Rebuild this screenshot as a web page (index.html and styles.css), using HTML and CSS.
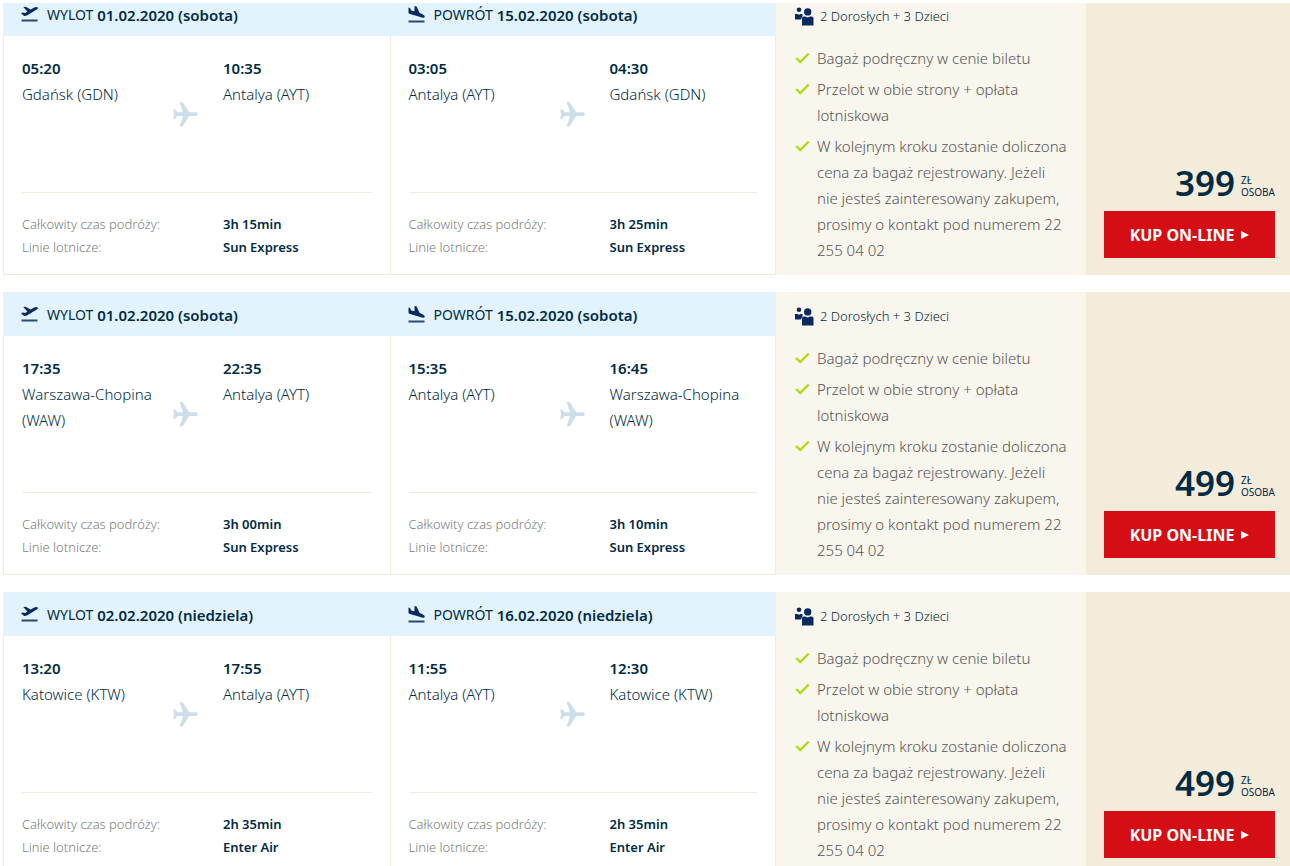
FILE: index.html
```
<!DOCTYPE html>
<html lang="pl">
<head>
  <meta charset="utf-8">
  <meta name="viewport" content="width=device-width, initial-scale=1.0">
  <title>Bilety lotnicze</title>
  <link rel="stylesheet" href="styles.css">
</head>
<body>
  <svg class="sprite" aria-hidden="true">
    <symbol id="takeoff" viewBox="0 0 17 17">
      <path d="M0.500 13.500h16v2h-16z" opacity=".85"/>
      <path d="M2.300 1 4.600.700 9.800 3.400 13.200 1.500C14.900.700 16.500.800 16.900 1.700 17.200 2.600 16.200 3.400 15 4L6.300 9.200C5.300 9.800 3.800 10.300 2.800 9.800L0 7.300 1.700 6.400 4.200 7 6.300 5.500z"/>
    </symbol>
    <symbol id="landing" viewBox="0 0 17 17">
      <path d="M0.500 14.500h16v2h-16z" opacity=".85"/>
      <path d="M0.500 1.500 2 2 3.300 4.600 6.500 5.300 6.500 0 8.600.500 11.500 6.800 15 8.400C16.400 9.200 17 10.200 16.700 11 16.400 11.800 15.400 11.900 14 11.500L2.100 8.100C1 7.800.500 7.200.500 6.200z"/>
    </symbol>
    <symbol id="plane" viewBox="0 0 26 26">
      <path d="M1 8.500H3.200L5.800 11.300H11L7.600 1H9.600C10.300 1 10.800 1.300 11.200 1.900L17.200 11.300H23.200C25 11.300 25.800 12.200 25.800 13.200S25 15 23.200 15H17.200L11.200 24.400C10.800 25 10.300 25.400 9.600 25.400H7.600L11 15H5.800L3.200 17.800H1L2.300 13.200z"/>
    </symbol>
    <symbol id="people" viewBox="0 0 19 19">
      <circle cx="4" cy="2.700" r="2.300"/>
      <path d="M0 7H2.400Q4 8.200 5.600 7H7.500V9.500L5.800 12.500H0z"/>
      <circle cx="12.700" cy="4.900" r="3.700"/>
      <path d="M7 18.500V11.500C7 10.300 8 9.600 9 9.600H10.200Q12.700 11.200 15.200 9.600H16.500C17.800 9.600 18.500 10.400 18.500 11.500V18.500z"/>
    </symbol>
    <symbol id="check" viewBox="0 0 15 12">
      <path d="M1.200 6 5.200 10 13.700 1.500" fill="none" stroke="currentColor" stroke-width="2.400"/>
    </symbol>
  </svg>

  <main class="offers">
    <article class="offer">
      <section class="flight">
        <h2 class="flight-header"><svg class="icon-flight"><use href="#takeoff"/></svg><span class="direction">WYLOT</span> 01.02.2020 (sobota)</h2>
        <div class="flight-body">
          <div class="route">
            <div class="stop"><strong>05:20</strong><span>Gdańsk (GDN)</span></div>
            <svg class="icon-plane"><use href="#plane"/></svg>
            <div class="stop"><strong>10:35</strong><span>Antalya (AYT)</span></div>
          </div>
          <dl class="info">
            <dt>Całkowity czas podróży:</dt><dd>3h 15min</dd>
            <dt>Linie lotnicze:</dt><dd>Sun Express</dd>
          </dl>
        </div>
      </section>
      <section class="flight">
        <h2 class="flight-header"><svg class="icon-flight"><use href="#landing"/></svg><span class="direction">POWRÓT</span> 15.02.2020 (sobota)</h2>
        <div class="flight-body">
          <div class="route">
            <div class="stop"><strong>03:05</strong><span>Antalya (AYT)</span></div>
            <svg class="icon-plane"><use href="#plane"/></svg>
            <div class="stop"><strong>04:30</strong><span>Gdańsk (GDN)</span></div>
          </div>
          <dl class="info">
            <dt>Całkowity czas podróży:</dt><dd>3h 25min</dd>
            <dt>Linie lotnicze:</dt><dd>Sun Express</dd>
          </dl>
        </div>
      </section>
      <section class="details">
        <p class="people"><svg class="icon-people"><use href="#people"/></svg>2 Dorosłych + 3 Dzieci</p>
        <ul class="benefits">
          <li><svg class="icon-check"><use href="#check"/></svg><span>Bagaż podręczny w cenie biletu</span></li>
          <li><svg class="icon-check"><use href="#check"/></svg><span>Przelot w obie strony + opłata lotniskowa</span></li>
          <li><svg class="icon-check"><use href="#check"/></svg><span>W kolejnym kroku zostanie doliczona cena za bagaż rejestrowany. Jeżeli nie jesteś zainteresowany zakupem, prosimy o kontakt pod numerem 22 255 04 02</span></li>
        </ul>
      </section>
      <section class="summary">
        <p class="price"><strong>399</strong><span class="unit"><span>ZŁ</span><span>OSOBA</span></span></p>
        <button class="buy-btn" type="button">KUP ON-LINE<span class="arrow"></span></button>
      </section>
    </article>

    <article class="offer">
      <section class="flight">
        <h2 class="flight-header"><svg class="icon-flight"><use href="#takeoff"/></svg><span class="direction">WYLOT</span> 01.02.2020 (sobota)</h2>
        <div class="flight-body">
          <div class="route">
            <div class="stop"><strong>17:35</strong><span>Warszawa-Chopina (WAW)</span></div>
            <svg class="icon-plane"><use href="#plane"/></svg>
            <div class="stop"><strong>22:35</strong><span>Antalya (AYT)</span></div>
          </div>
          <dl class="info">
            <dt>Całkowity czas podróży:</dt><dd>3h 00min</dd>
            <dt>Linie lotnicze:</dt><dd>Sun Express</dd>
          </dl>
        </div>
      </section>
      <section class="flight">
        <h2 class="flight-header"><svg class="icon-flight"><use href="#landing"/></svg><span class="direction">POWRÓT</span> 15.02.2020 (sobota)</h2>
        <div class="flight-body">
          <div class="route">
            <div class="stop"><strong>15:35</strong><span>Antalya (AYT)</span></div>
            <svg class="icon-plane"><use href="#plane"/></svg>
            <div class="stop"><strong>16:45</strong><span>Warszawa-Chopina (WAW)</span></div>
          </div>
          <dl class="info">
            <dt>Całkowity czas podróży:</dt><dd>3h 10min</dd>
            <dt>Linie lotnicze:</dt><dd>Sun Express</dd>
          </dl>
        </div>
      </section>
      <section class="details">
        <p class="people"><svg class="icon-people"><use href="#people"/></svg>2 Dorosłych + 3 Dzieci</p>
        <ul class="benefits">
          <li><svg class="icon-check"><use href="#check"/></svg><span>Bagaż podręczny w cenie biletu</span></li>
          <li><svg class="icon-check"><use href="#check"/></svg><span>Przelot w obie strony + opłata lotniskowa</span></li>
          <li><svg class="icon-check"><use href="#check"/></svg><span>W kolejnym kroku zostanie doliczona cena za bagaż rejestrowany. Jeżeli nie jesteś zainteresowany zakupem, prosimy o kontakt pod numerem 22 255 04 02</span></li>
        </ul>
      </section>
      <section class="summary">
        <p class="price"><strong>499</strong><span class="unit"><span>ZŁ</span><span>OSOBA</span></span></p>
        <button class="buy-btn" type="button">KUP ON-LINE<span class="arrow"></span></button>
      </section>
    </article>

    <article class="offer">
      <section class="flight">
        <h2 class="flight-header"><svg class="icon-flight"><use href="#takeoff"/></svg><span class="direction">WYLOT</span> 02.02.2020 (niedziela)</h2>
        <div class="flight-body">
          <div class="route">
            <div class="stop"><strong>13:20</strong><span>Katowice (KTW)</span></div>
            <svg class="icon-plane"><use href="#plane"/></svg>
            <div class="stop"><strong>17:55</strong><span>Antalya (AYT)</span></div>
          </div>
          <dl class="info">
            <dt>Całkowity czas podróży:</dt><dd>2h 35min</dd>
            <dt>Linie lotnicze:</dt><dd>Enter Air</dd>
          </dl>
        </div>
      </section>
      <section class="flight">
        <h2 class="flight-header"><svg class="icon-flight"><use href="#landing"/></svg><span class="direction">POWRÓT</span> 16.02.2020 (niedziela)</h2>
        <div class="flight-body">
          <div class="route">
            <div class="stop"><strong>11:55</strong><span>Antalya (AYT)</span></div>
            <svg class="icon-plane"><use href="#plane"/></svg>
            <div class="stop"><strong>12:30</strong><span>Katowice (KTW)</span></div>
          </div>
          <dl class="info">
            <dt>Całkowity czas podróży:</dt><dd>2h 35min</dd>
            <dt>Linie lotnicze:</dt><dd>Enter Air</dd>
          </dl>
        </div>
      </section>
      <section class="details">
        <p class="people"><svg class="icon-people"><use href="#people"/></svg>2 Dorosłych + 3 Dzieci</p>
        <ul class="benefits">
          <li><svg class="icon-check"><use href="#check"/></svg><span>Bagaż podręczny w cenie biletu</span></li>
          <li><svg class="icon-check"><use href="#check"/></svg><span>Przelot w obie strony + opłata lotniskowa</span></li>
          <li><svg class="icon-check"><use href="#check"/></svg><span>W kolejnym kroku zostanie doliczona cena za bagaż rejestrowany. Jeżeli nie jesteś zainteresowany zakupem, prosimy o kontakt pod numerem 22 255 04 02</span></li>
        </ul>
      </section>
      <section class="summary">
        <p class="price"><strong>499</strong><span class="unit"><span>ZŁ</span><span>OSOBA</span></span></p>
        <button class="buy-btn" type="button">KUP ON-LINE<span class="arrow"></span></button>
      </section>
    </article>
  </main>
</body>
</html>
```
FILE: styles.css
```
* { box-sizing: border-box; }
html { overflow: hidden; }
body { margin: 0; padding: 3px 0 0 3px; background: #fff; color: #092a5e; font-family: "Noto Sans", "Open Sans", sans-serif; font-size: 15px; line-height: 26px; }
h2, p, ul, dl, dd { margin: 0; padding: 0; }
ul { list-style: none; }
svg { flex: none; fill: currentColor; }
.sprite { display: none; }

.offers { overflow: hidden; display: flex; flex-direction: column; gap: 17px; }
.offer { display: grid; grid-template-columns: 1fr 1fr 310px 204px; min-height: 283px; color: #002b45; }
.offer:first-child { margin-top: -11px; }

.flight { display: flex; flex-direction: column; min-width: 0; }
.flight-header { display: flex; align-items: center; height: 44px; padding: 1px 18px 0; background: #e2f3fe; font-size: 15px; font-weight: 600; white-space: pre; }
.direction { font-size: 14px; font-weight: 400; }
.icon-flight { width: 17px; height: 17px; margin-right: 9px; color: #092a5e; }
.flight-body { flex: 1; padding: 19px 18px 15px 18px; border: 1px solid #f1ebdb; border-width: 0 0 1px 1px; }
.flight:nth-child(2) .flight-body { border-right-width: 1px; }
.route { display: grid; grid-template-columns: 150px 51px 1fr; min-height: 138px; border-bottom: 1px solid #f1ebdb; }
.stop { font-weight: 300; }
.stop strong { display: block; font-weight: 600; }
.icon-plane { width: 26px; height: 26px; margin-top: 46px; color: #cddeeb; }
.info { display: grid; grid-template-columns: 201px 1fr; padding-top: 20px; font-size: 13px; line-height: 23px; }
.info dt { color: #7c7c7c; font-weight: 300; }
.info dd { font-weight: 600; }

.details { padding: 11px 18px 4px 19px; background: #f9f6ee; color: #555; }
.people { display: flex; align-items: center; color: #002b45; font-size: 13px; font-weight: 300; }
.icon-people { width: 19px; height: 19px; margin-right: 6px; color: #092a5e; }
.benefits { padding-top: 16px; font-weight: 300; }
.benefits li { display: flex; }
.benefits li + li { margin-top: 5px; }
.icon-check { width: 15px; height: 12px; margin: 7px 7px 0 0; color: #aedb14; }

.summary { display: flex; flex-direction: column; justify-content: flex-end; padding: 0 15px 17px 18px; background: #f3ecdb; }
.price { display: flex; justify-content: flex-end; align-items: flex-end; margin-bottom: 10px; }
.price strong { font-size: 35px; line-height: 36px; font-weight: 600; }
.unit { display: flex; flex-direction: column; margin-left: 6px; font-size: 10px; line-height: 12px; padding-bottom: 3px; }
.buy-btn { display: flex; justify-content: center; align-items: center; height: 47px; border: 0; background: #d50e15; color: #fff; font: inherit; font-size: 16px; font-weight: 700; cursor: pointer; }
.buy-btn:hover { background: #b80c12; }
.arrow { margin-left: 7px; border: 4px solid transparent; border-left: 8px solid #fff; border-right: 0; }
```
